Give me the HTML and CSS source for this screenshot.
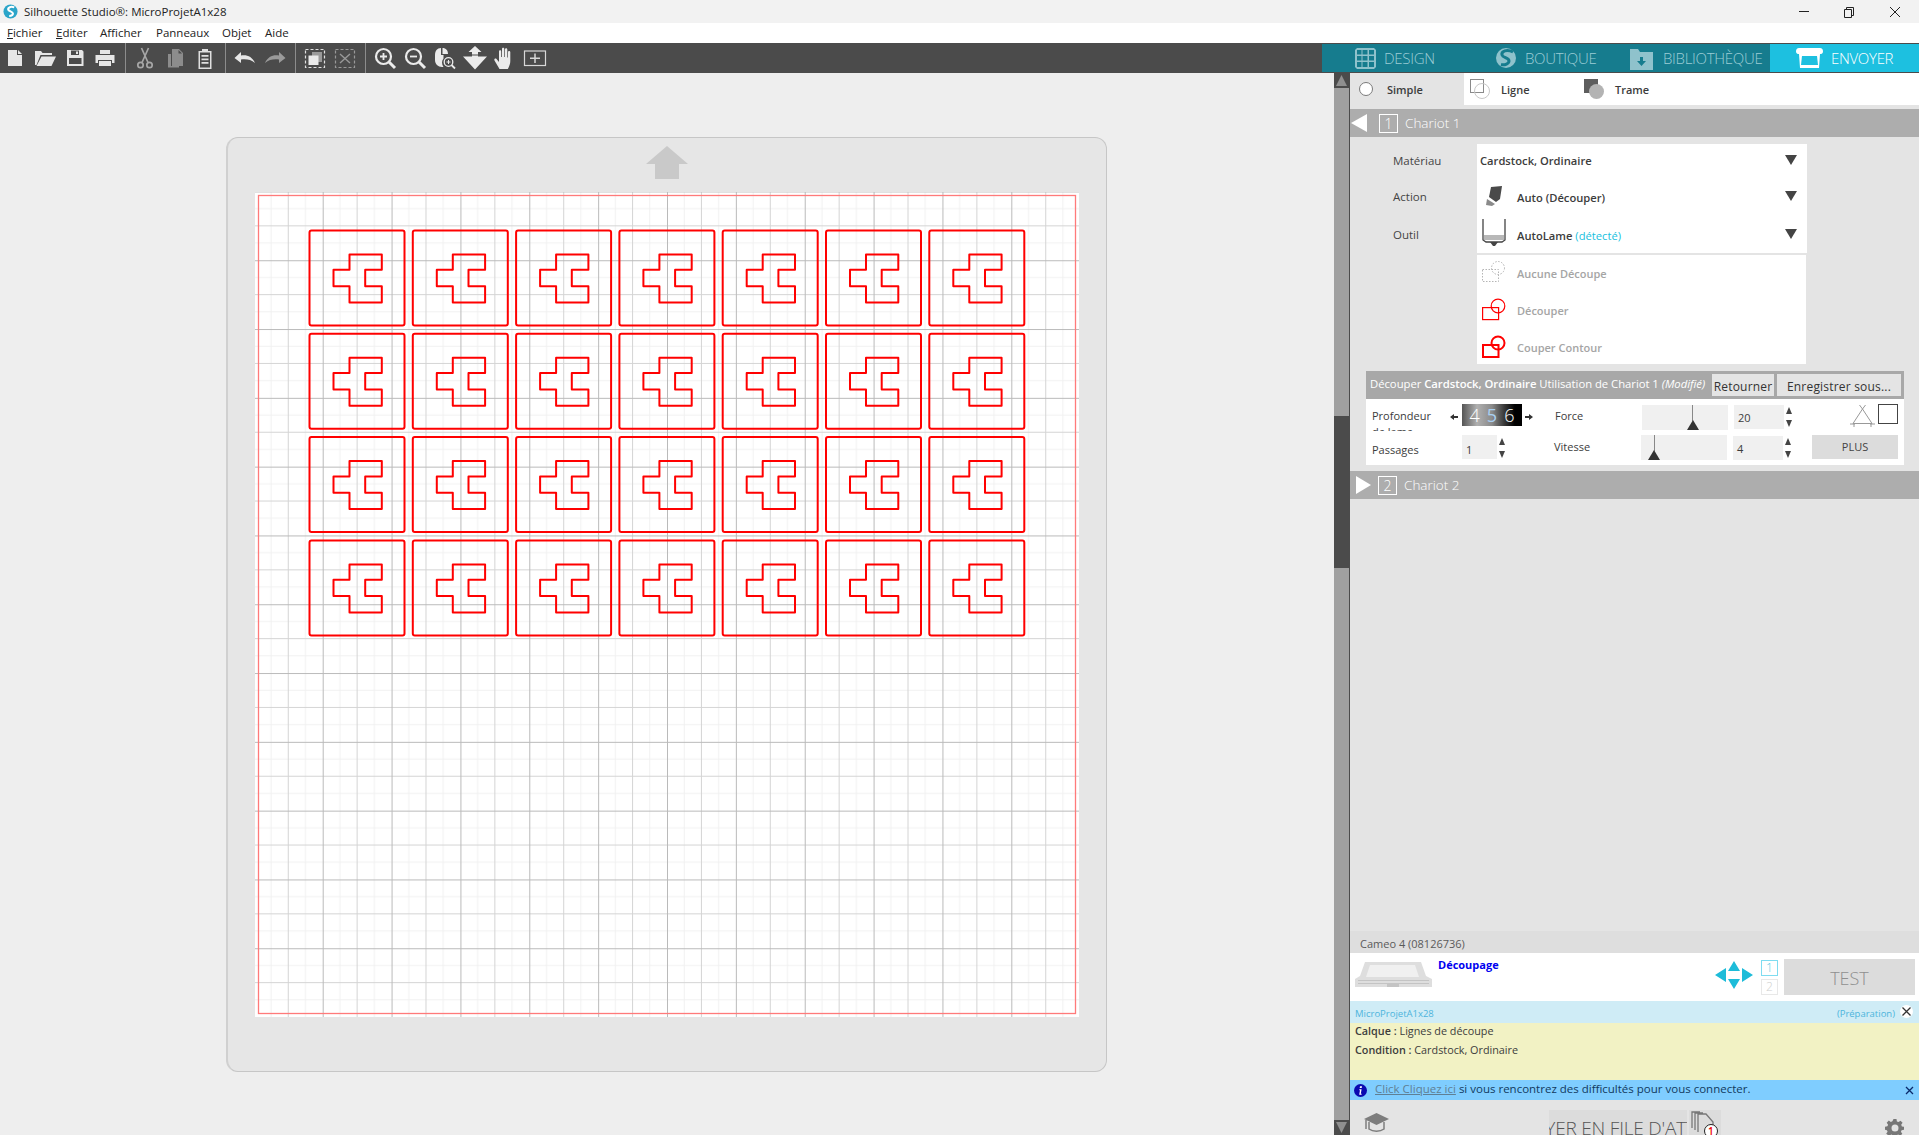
FILE: index.html
```html
<!DOCTYPE html>
<html lang="fr">
<head>
<meta charset="utf-8">
<title>Silhouette Studio</title>
<link rel="stylesheet" href="styles.css">
</head>
<body>
<div class="app">
  <header class="titlebar">
    <svg class="logo" viewBox="0 0 16 16"><circle cx="8" cy="8" r="7.5" fill="#2ba5c9"/><path d="M12 3.6C8.5 2.2 5 3.6 5.6 6c.5 2 5 1.8 5 4.2 0 1.6-2 2.6-4 2.6" fill="none" stroke="#fff" stroke-width="2.2"/></svg>
    <span class="title">Silhouette Studio®: MicroProjetA1x28</span>
    <div class="winctl">
      <svg class="wbtn" viewBox="0 0 46 22"><path d="M18 10.5h10" stroke="#222" fill="none"/></svg>
      <svg class="wbtn" viewBox="0 0 46 22"><path d="M17.500 8.500h7v8h-7zM19.500 8.500v-2h7v8h-2" stroke="#222" fill="none"/></svg>
      <svg class="wbtn" viewBox="0 0 46 22"><path d="M17 6l10 10M27 6L17 16" stroke="#222" fill="none"/></svg>
    </div>
  </header>

  <nav class="menubar">
    <span class="mi m1"><u>F</u>ichier</span>
    <span class="mi m2"><u>E</u>diter</span>
    <span class="mi m3">Afficher</span>
    <span class="mi m4">Panneaux</span>
    <span class="mi m5">Objet</span>
    <span class="mi m6">Aide</span>
  </nav>

  <div class="toolrow">
    <div class="tools">
      <div class="tgroup first">
        <svg class="ti" viewBox="0 0 24 24"><path fill="#e6e6e6" d="M5 4h9v5h5v11H5zM15 4l4 4h-4z"/></svg>
        <svg class="ti" viewBox="0 0 24 24"><path fill="#e6e6e6" d="M2 5h6l1.500 2H19v2H7.500L3.500 19H2zM8.500 10.500H23L18.500 20H3.500z"/></svg>
        <svg class="ti" viewBox="0 0 24 24"><path fill="#e6e6e6" fill-rule="evenodd" d="M4 4h15l1.500 1.500V20H4zM6 12v6h12.500v-6zM8 4.500V9h8V4.500zM13 5.500h2v2.500h-2z"/></svg>
        <svg class="ti" viewBox="0 0 24 24"><path fill="#e6e6e6" d="M7 4h10v4H7zM2.500 9h19v8H19v-3H5v3H2.500zM6 15h12v5H6z"/></svg>
      </div>
      <div class="tgroup">
        <svg class="ti" viewBox="0 0 24 24"><g fill="none" stroke="#a6a6a6" stroke-width="1.700"><circle cx="7.500" cy="19" r="2.700"/><circle cx="16.500" cy="19" r="2.700"/><path d="M9 16.500L15.500 2M15 16.500L8.500 2"/></g></svg>
        <svg class="ti" viewBox="0 0 24 24"><path fill="#8c8c8c" d="M5 8h3v12h8v1.500H5zM9 3h7l4 4v13H9z"/><path fill="#4b4b4b" d="M15.500 4v3.500H19z"/></svg>
        <svg class="ti" viewBox="0 0 24 24"><path fill="#e0e0e0" fill-rule="evenodd" d="M9 3h6v2h3.500v18h-13V5H9zM7 6.500v15h10v-15zM8.500 9h7v1.800h-7zM8.500 12.500h7v1.800h-7zM8.500 16h7v1.800h-7z"/></svg>
      </div>
      <div class="tgroup">
        <svg class="ti" viewBox="0 0 24 24"><path fill="#e8e8e8" d="M1.500 12L8 6v3.500c6-1 11 1 14 7.500-4-3.500-8.500-4-14-3.500V17z"/></svg>
        <svg class="ti" viewBox="0 0 24 24"><path fill="#9a9a9a" d="M22.500 12L16 6v3.500C10 8.500 5 10.500 2 17c4-3.500 8.500-4 14-3.500V17z"/></svg>
      </div>
      <div class="tgroup">
        <svg class="ti" viewBox="0 0 24 24"><rect x="2.500" y="3.500" width="19" height="18" fill="none" stroke="#e0e0e0" stroke-width="1.200" stroke-dasharray="3 2"/><path fill="#9a9a9a" d="M9 6h10v10H9z"/><path fill="#eaeaea" d="M5.500 9.500h10v9.500h-10z"/></svg>
        <svg class="ti" viewBox="0 0 24 24"><rect x="2.500" y="3.500" width="19" height="18" fill="none" stroke="#999" stroke-width="1.200" stroke-dasharray="3 2"/><path d="M7 8l10 9M17 8L7 17" stroke="#999" stroke-width="1.400" fill="none"/></svg>
      </div>
      <div class="tgroup last">
        <svg class="ti" viewBox="0 0 24 24"><g fill="none" stroke="#ebebeb"><circle cx="10.500" cy="10.500" r="7.500" stroke-width="2.200"/><path d="M16 16l6 6" stroke-width="3"/><path d="M7 10.500h7M10.500 7v7" stroke-width="1.800"/></g></svg>
        <svg class="ti" viewBox="0 0 24 24"><g fill="none" stroke="#ebebeb"><circle cx="10.500" cy="10.500" r="7.500" stroke-width="2.200"/><path d="M16 16l6 6" stroke-width="3"/><path d="M7 10.500h7" stroke-width="1.800"/></g></svg>
        <svg class="ti" viewBox="0 0 24 24"><path fill="#ebebeb" d="M8 2c-4 0-6 3-6 7v5c0 4 3 7 7 7h1.500c-2-3-2-6 0-8.500V9H8zM9.500 2v6h5.500C15 4.500 13 2 9.500 2z"/><g fill="none" stroke="#ebebeb"><circle cx="15.500" cy="16" r="4.300" stroke-width="1.300"/><path d="M18.500 19l3.500 3.500" stroke-width="1.800"/><path d="M13.500 16h4M15.500 14v4" stroke-width="1"/></g></svg>
        <svg class="ti" viewBox="0 0 24 24"><path fill="#ebebeb" d="M12 0l6.500 6H15v2.500H9V6H5.500zM0 10.500h24L12 23.500z"/><path fill="#ebebeb" d="M9 9.500h6v3H9z"/></svg>
        <svg class="ti" viewBox="0 0 24 24"><path fill="#ebebeb" d="M6.500 23l-5-8.500c-.8-1.500 1-2.500 2-1.500l2.500 3V5.500c0-1.600 2.200-1.600 2.200 0V11h.8V3c0-1.600 2.300-1.600 2.300 0v8h.7V3.500c0-1.600 2.300-1.600 2.300 0V11.500h.7V6c0-1.500 2.300-1.500 2.300 0v9c0 3-1 5-2.500 8z"/></svg>
        <svg class="ti wide" viewBox="0 0 24 24"><rect x="1.500" y="5" width="21" height="14.500" fill="none" stroke="#d8d8d8" stroke-width="1.200"/><path d="M12 7.500v9.500M7 12.200h10" stroke="#d8d8d8" stroke-width="1.500" fill="none"/></svg>
      </div>
    </div>
    <div class="tabs">
      <div class="tab t-design">
        <svg class="tabicon" viewBox="0 0 21 21"><path fill="#8fc2cc" fill-rule="evenodd" d="M2 0h17l2 2v17l-2 2H2l-2-2V2zM2 2v4.500h4.500V2zM7.500 2v4.500h5V2zM14 2v4.500h5V2zM2 8v4.500h4.500V8zM7.500 8v4.500h5V8zM14 8v4.500h5V8zM2 14v5h4.500v-5zM7.500 14v5h5v-5zM14 14v5h5v-5z"/></svg>
        <span>DESIGN</span>
      </div>
      <div class="tab t-boutique">
        <svg class="tabicon" viewBox="0 0 20 20"><circle cx="10" cy="10" r="10" fill="#8fc2cc"/><path d="M17 4C11 1 5 3 6 7c.8 3 7 2.500 7 6 0 2.500-4 4.500-8 3.500" fill="none" stroke="#167c8e" stroke-width="3"/></svg>
        <span>BOUTIQUE</span>
      </div>
      <div class="tab t-biblio">
        <svg class="tabicon" viewBox="0 0 23 23"><path fill="#8fc2cc" d="M0 2h8l2 3h13v18H0z"/><path fill="#167c8e" d="M10 10h3v4h3l-4.500 5L7 14h3z"/></svg>
        <span>BIBLIOTHÈQUE</span>
      </div>
      <div class="tab t-envoyer">
        <svg class="tabicon" viewBox="0 0 27 20"><path fill="#fff" d="M3 0h21c2 0 3 1.500 3 3.500 0 1.500-1 2.500-2 2.500h-1l-1 14H4L3 6H2C1 6 0 5 0 3.500 0 1.500 1 0 3 0z"/><path fill="#1dc0e0" d="M6 8h15l1 9H5z"/></svg>
        <span>ENVOYER</span>
      </div>
    </div>
  </div>

  <main class="main">
    <section class="canvas">
      <div class="mat">
        <svg class="matarrow" viewBox="0 0 42 33"><path fill="#c9c9c9" d="M21 0l21 18H33v15H9V18H0z"/></svg>
        <svg class="sheet" viewBox="0 0 824 825">
          <defs>
            <pattern id="grid" patternUnits="userSpaceOnUse" x="-1.160" y="-0.560" width="68.860" height="68.800">
              <path d="M17.215 0v68.800M51.645 0v68.800M0 17.200h68.860M0 51.600h68.860" stroke="#f1f1f1" stroke-width="1" fill="none"/>
              <path d="M34.430 0v68.800M0 34.400h68.860" stroke="#d4d4d4" stroke-width="1" fill="none"/>
              <path d="M.5 0v68.800M0 .5h68.860" stroke="#bababa" stroke-width="1" fill="none"/>
            </pattern>
            <g id="cell" fill="none" stroke="#f00" stroke-width="2" stroke-linejoin="round">
              <rect x="0" y="0" width="95" height="95" rx="2"/>
              <path d="M40 24h32.300v15.300H55.700v16.400h16.600V72H40V55.700H24V39.300h16z"/>
            </g>
            <g id="row">
              <use href="#cell" x="0"/><use href="#cell" x="103.300"/><use href="#cell" x="206.600"/><use href="#cell" x="309.900"/><use href="#cell" x="413.200"/><use href="#cell" x="516.500"/><use href="#cell" x="619.800"/>
            </g>
          </defs>
          <rect width="824" height="825" fill="#fff"/>
          <rect width="824" height="825" fill="url(#grid)"/>
          <rect x="3.500" y="3.500" width="817" height="818" fill="none" stroke="#ff7a7a" stroke-width="1.300"/>
          <g transform="translate(54.500 38.500)">
            <use href="#row" y="0"/><use href="#row" y="103.300"/><use href="#row" y="206.600"/><use href="#row" y="309.900"/>
          </g>
        </svg>
      </div>
    </section>

    <div class="scrollbar">
      <div class="sb-btn"><svg viewBox="0 0 15 15"><path fill="#8f8f8f" d="M7.500 2L13 13H2z"/></svg></div>
      <div class="sb-a"></div>
      <div class="sb-thumb"></div>
      <div class="sb-b"></div>
      <div class="sb-btn"><svg viewBox="0 0 15 15"><path fill="#8f8f8f" d="M2 2h11L7.500 13z"/></svg></div>
    </div>

    <aside class="panel">
      <div class="modes">
        <div class="mode active">
          <svg class="mode-ic" viewBox="0 0 14 14"><circle cx="7" cy="7" r="6.500" fill="#fff" stroke="#7a7a7a"/></svg>
          <span>Simple</span>
        </div>
        <div class="mode">
          <svg class="mode-ic2" viewBox="0 0 20 20"><rect x=".5" y=".5" width="13" height="13" fill="none" stroke="#8a8a8a"/><circle cx="12" cy="12" r="7.500" fill="none" stroke="#c8c8c8"/></svg>
          <span>Ligne</span>
        </div>
        <div class="mode">
          <svg class="mode-ic2" viewBox="0 0 20 20"><rect width="14" height="14" fill="#5e5e5e"/><circle cx="12.500" cy="12.500" r="7.500" fill="#b3b3b3"/></svg>
          <span>Trame</span>
        </div>
      </div>

      <div class="bar bar1">
        <svg class="bar-tri" viewBox="0 0 16 18"><path fill="#fff" d="M16 0v18L0 9z"/></svg>
        <span class="bar-num">1</span>
        <span class="bar-label">Chariot 1</span>
      </div>

      <div class="form">
        <span class="flabel">Matériau</span>
        <div class="sel sel-mat"><b>Cardstock, Ordinaire</b><i class="caret"></i></div>
        <span class="flabel lower">Action</span>
        <div class="sel">
          <svg class="sel-ic" viewBox="0 0 24 24"><path fill="#4a4a4a" d="M9 3l11-1-2 13-4 3-7-5z"/><path fill="#8a8a8a" d="M5 15l8 5-3 2-6-1z"/></svg>
          <b>Auto (Découper)</b><i class="caret"></i>
        </div>
        <span class="flabel lower">Outil</span>
        <div class="sel">
          <svg class="sel-ic tall" viewBox="0 0 24 30"><path fill="none" stroke="#444" stroke-width="1.300" d="M1 1v21l3 2h16l3-2V1"/><path fill="#b8b8b8" d="M2 17h20v5H2z"/><path fill="#444" d="M8 24h8l-3 4h-2z"/></svg>
          <b>AutoLame <em>(détecté)</em></b><i class="caret"></i>
        </div>
      </div>

      <div class="cutlist">
        <div class="cut">
          <svg class="cut-ic" viewBox="0 0 24 24"><g fill="none" stroke="#b5b5b5" stroke-dasharray="1.500 1.500"><rect x=".5" y="8.500" width="16" height="12"/><circle cx="16" cy="7" r="6.500"/></g></svg>
          <span>Aucune Découpe</span>
        </div>
        <div class="cut">
          <svg class="cut-ic" viewBox="0 0 24 24"><g fill="none" stroke="#f00" stroke-width="1.200"><rect x=".6" y="9.600" width="16" height="12"/><circle cx="16" cy="8" r="6.800"/></g></svg>
          <span>Découper</span>
        </div>
        <div class="cut">
          <svg class="cut-ic" viewBox="0 0 24 24"><g fill="none" stroke="#f00" stroke-width="2"><rect x="1" y="10" width="15.500" height="12"/><circle cx="16" cy="8" r="6.500"/></g></svg>
          <span>Couper Contour</span>
        </div>
      </div>

      <div class="settings">
        <div class="set-head">
          <span class="set-title">Découper <b>Cardstock, Ordinaire</b> Utilisation de Chariot 1 <em>(Modifié)</em></span>
          <span class="set-btn b-ret">Retourner</span>
          <span class="set-btn b-save">Enregistrer sous...</span>
        </div>
        <div class="set-body">
          <div class="set-row">
            <div class="lab lab-depth">Profondeur de lame</div>
            <svg class="tiny" viewBox="0 0 8 8"><path fill="#333" d="M0 4l4-3v2h4v2H4v2z"/></svg>
            <div class="depth"><span>3</span><span>4</span><span class="d5">5</span><span>6</span><span>7</span></div>
            <svg class="tiny" viewBox="0 0 8 8"><path fill="#333" d="M8 4L4 1v2H0v2h4v2z"/></svg>
            <div class="lab lab-force">Force</div>
            <div class="slider s-force"><i class="needle"></i><i class="knob"></i></div>
            <div class="num">20</div>
            <div class="spin"><i class="up"></i><i class="dn"></i></div>
            <svg class="trio" viewBox="0 0 25 24"><path fill="none" stroke="#999" d="M12.500 5L3 19.500h19zM9.500 1l3 4 3-4M0 20h5M20 20h5M4 19v4M21 19v4"/></svg>
            <div class="square"></div>
          </div>
          <div class="set-row r2">
            <div class="lab lab-pass">Passages</div>
            <div class="num n-pass">1</div>
            <div class="spin sp-pass"><i class="up"></i><i class="dn"></i></div>
            <div class="lab lab-speed">Vitesse</div>
            <div class="slider s-speed"><i class="needle"></i><i class="knob"></i></div>
            <div class="num">4</div>
            <div class="spin"><i class="up"></i><i class="dn"></i></div>
            <div class="plus">PLUS</div>
          </div>
        </div>
      </div>

      <div class="bar bar2">
        <svg class="bar-tri t2" viewBox="0 0 15 18"><path fill="#fff" d="M0 0v18l15-9z"/></svg>
        <span class="bar-num">2</span>
        <span class="bar-label">Chariot 2</span>
      </div>

      <div class="grow"></div>

      <div class="device">Cameo 4 (08126736)</div>
      <div class="devrow">
        <svg class="printer" viewBox="0 0 77 25"><path fill="#dedede" d="M10 0h56l5 14 6 3v8H0v-8l5-3z"/><path fill="#f0f0f0" d="M15 3h45l4 12H11z"/><path fill="#c4c4c4" d="M3 18h71v1H3zM3 21h71v1H3zM32 22h12v3H32z"/></svg>
        <span class="devname">Découpage</span>
        <svg class="arrows" viewBox="0 0 38 28"><path fill="#1dbcd9" d="M0 14l11-7v14zM38 14l-11-7v14zM19 0l6 10H13zM19 28l-6-10h12z"/></svg>
        <div class="slots"><span class="slot on">1</span><span class="slot">2</span></div>
        <div class="testbtn">TEST</div>
      </div>
      <div class="job">
        <span>MicroProjetA1x28</span>
        <span class="job-state">(Préparation)</span>
        <svg class="job-x" viewBox="0 0 13 13"><circle cx="6.500" cy="6.500" r="6.500" fill="#fff"/><path d="M2.500 2.500l8 8M10.500 2.500l-8 8" stroke="#333" stroke-width="1.300" fill="none"/></svg>
      </div>
      <div class="jobinfo">
        <p><b>Calque :</b> Lignes de découpe</p>
        <p><b>Condition :</b> Cardstock, Ordinaire</p>
      </div>
      <div class="notice">
        <svg class="info" viewBox="0 0 13 13"><circle cx="6.500" cy="6.500" r="6.500" fill="#0a0ab0"/><path fill="#fff" d="M6 2.200h2l-.3 1.800H5.700zM5.400 5.200h2.200L6.800 9.800h1l-.3 1H5.200l.8-4.600h-.8z"/></svg>
        <span class="notice-t"><a>Click Cliquez ici</a> si vous rencontrez des difficultés pour vous connecter.</span>
        <svg class="notice-x" viewBox="0 0 9 9"><path d="M1 1l7 7M8 1L1 8" stroke="#0a2a6a" stroke-width="1.300" fill="none"/></svg>
      </div>
      <div class="footer">
        <svg class="hat" viewBox="0 0 25 25"><path fill="#7d7d7d" d="M12.500 2L25 8l-12.500 6L0 8z"/><path fill="none" stroke="#7d7d7d" stroke-width="1.500" d="M5 11v7c4 3 11 3 15 0v-7M2 9v9"/></svg>
        <div class="queue"><span>ENVOYER EN FILE D'ATTENTE</span></div>
        <div class="qicon">
          <svg viewBox="0 0 32 25"><path fill="none" stroke="#777" stroke-width="1.300" d="M3 18V2h8M6 20V3h8M9 22V4h8l7 8v10"/><circle cx="22" cy="21" r="6.500" fill="#fff" stroke="#222"/></svg>
          <span class="qcount">1</span>
        </div>
        <svg class="gear" viewBox="0 0 18 18"><path fill="#777" d="M7.500 0h3l.4 2.400 1.600.7 2-1.400 2.100 2.100-1.400 2 .7 1.600 2.100.4v3l-2.400.4-.7 1.600 1.400 2-2.100 2.100-2-1.400-1.600.7-.4 2.400h-3l-.4-2.400-1.600-.7-2 1.400L.2 14.800l1.400-2-.7-1.600L-1 10.700v-3l2.400-.4.700-1.600-1.400-2L2.800 1.600l2 1.400 1.600-.7zM9 5.500a3.500 3.500 0 100 7 3.500 3.500 0 000-7z"/></svg>
      </div>
    </aside>
  </main>
</div>
</body>
</html>
```

FILE: styles.css
```css
* { box-sizing: border-box; }
html, body { margin: 0; padding: 0; }
body {
  width: 1919px;
  height: 1135px;
  overflow: hidden;
  font-family: "Open Sans", "Noto Sans", sans-serif;
  font-size: 11.5px;
  color: #3c3c3c;
  background: #eee;
}
.app { display: flex; flex-direction: column; height: 1135px; }

/* title bar */
.titlebar { height: 23px; background: #f2f2f2; display: flex; align-items: center; padding-left: 3px; color: #222; flex: none; }
.logo { width: 15px; height: 15px; margin-right: 6px; }
.title { font-size: 11.5px; }
.winctl { margin-left: auto; display: flex; }
.wbtn { width: 46px; height: 22px; display: block; }

/* menu */
.menubar { height: 20px; background: #fff; display: flex; align-items: center; padding-bottom: 2px; color: #222; flex: none; font-size: 11.5px; }
.mi { display: block; }
.m1 { margin-left: 7px; width: 49px; }
.m2 { width: 44px; }
.m3 { width: 56px; }
.m4 { width: 66px; }
.m5 { width: 43px; }

/* toolbar */
.toolrow { height: 30px; background: #4b4b4b; display: flex; flex: none; }
.tools { width: 1322px; display: flex; }
.tgroup { display: flex; align-items: center; padding: 0 5px 0 4px; border-right: 1px solid #8c8c8c; }
.tgroup.first { padding-left: 0; }
.tgroup.last { border-right: 0; }
.ti { width: 24px; height: 24px; margin: 0 3px; display: block; }
.tabs { flex: 1; display: flex; padding: 1px 0; }
.tab { height: 28px; display: flex; align-items: center; background: #167c8e; color: #9ccdd6; font-size: 15px; font-weight: 300; letter-spacing: -.3px; }
.tabicon { display: block; margin-right: 8px; }
.t-design { width: 174px; padding-left: 33px; }
.t-design .tabicon { width: 21px; height: 21px; }
.t-boutique { width: 134px; }
.t-boutique .tabicon { width: 20px; height: 20px; margin-right: 9px; }
.t-biblio { width: 140px; }
.t-biblio .tabicon { width: 23px; height: 23px; margin-right: 10px; }
.t-envoyer { flex: 1; padding-left: 26px; background: #1dc0e0; color: #fff; }
.t-envoyer .tabicon { width: 27px; height: 20px; }

/* main */
.main { flex: 1; display: flex; min-height: 0; }
.canvas { width: 1334px; padding: 64px 0 0 226px; background: #eee; flex: none; }
.mat { width: 881px; height: 935px; background: #e6e6e6; border: 1px solid #c6c6c6; border-left: 2px solid #d0d0d0; border-radius: 12px; display: flex; flex-direction: column; align-items: flex-start; }
.matarrow { width: 42px; height: 33px; display: block; margin: 8px 0 0 418px; }
.sheet { width: 824px; height: 825px; display: block; margin: 13px 0 0 27px; }

/* scrollbar */
.scrollbar { width: 16px; flex: none; display: flex; flex-direction: column; background: #a0a0a0; border-right: 1px solid #4b4b4b; }
.sb-btn { height: 15px; background: #4b4b4b; flex: none; }
.sb-btn svg { width: 15px; height: 15px; display: block; }
.sb-a { height: 328px; }
.sb-thumb { height: 152px; background: #4b4b4b; }
.sb-b { flex: 1; }

/* panel */
.panel { flex: 1; background: #e4e4e4; display: flex; flex-direction: column; min-width: 0; }
.modes { height: 32px; background: #fff; display: flex; flex: none; }
.mode { width: 114px; display: flex; align-items: center; font-weight: 600; font-size: 11px; padding-left: 6px; color: #3c3c3c; }
.mode.active { background: #e4e4e4; padding-left: 9px; }
.mode-ic { width: 14px; height: 14px; margin-right: 14px; }
.mode-ic2 { width: 20px; height: 20px; margin: 0 11px 0 0; }
.bar { height: 28px; background: #adadad; display: flex; align-items: center; flex: none; color: #fff; }
.bar1 { margin-top: 4px; padding-left: 1px; }
.bar2 { margin-top: 6px; padding-left: 6px; }
.bar-tri { width: 16px; height: 18px; margin-right: 12px; }
.bar-tri.t2 { width: 15px; height: 18px; margin-right: 7px; }
.bar-num { width: 19px; height: 19px; border: 1px solid #fff; text-align: center; font-size: 14px; font-weight: 300; line-height: 17px; margin-right: 7px; }
.bar-label { font-size: 13.500px; font-weight: 300; }

.form { display: grid; grid-template-columns: 127px 330px; grid-template-rows: 33px 38px 38px; margin-top: 7px; flex: none; }
.flabel { padding-left: 43px; font-size: 11.500px; align-self: center; color: #444; }
.flabel.lower { margin-top: 1px; }
.sel { background: #fff; display: flex; align-items: center; padding: 2px 0 0 5px; position: relative; font-size: 11.200px; }
.sel b, .cut span { font-weight: 600; }
.sel-mat { padding: 0 0 0 3px; }
.sel em { font-style: normal; color: #18bfe0; font-weight: 400; }
.caret { position: absolute; right: 10px; top: 14px; width: 0; height: 0; border-left: 6.500px solid transparent; border-right: 6.500px solid transparent; border-top: 10px solid #444; }
.sel-mat .caret { top: 11px; }
.sel-ic { width: 24px; height: 24px; margin: -2px 11px 0 0; flex: none; }
.sel-ic.tall { height: 30px; margin-top: -5px; }
.cut-ic { width: 24px; height: 24px; margin-right: 11px; flex: none; }
.cutlist { width: 329px; height: 109px; margin: 2px 0 0 127px; background: #fff; display: flex; flex-direction: column; gap: 1px; flex: none; }
.cut { height: 36px; flex: none; display: flex; align-items: center; padding-left: 5px; color: #a5a5a5; font-size: 11px; }

.settings { margin: 7px 15px 0 16px; flex: none; }
.set-head { height: 28px; background: #a8a8a8; color: #fff; display: flex; align-items: center; padding-left: 4px; }
.set-title { width: 342px; white-space: nowrap; font-size: 11.300px; letter-spacing: -.03px; margin-top: -3px; }
.set-title b { font-weight: 600; }
.set-btn { height: 22px; background: #e4e4e4; color: #333; font-size: 12px; display: flex; align-items: center; justify-content: center; letter-spacing: .2px; padding-top: 2px; }
.b-ret { width: 62px; margin-right: 3px; }
.b-save { width: 124px; }
.set-body { height: 66px; background: #fff; padding: 5px 0 0 6px; display: flex; flex-direction: column; gap: 4px; }
.set-row { display: flex; height: 27px; align-items: flex-start; }
.r2 { height: 26px; }
.lab { font-size: 11px; line-height: 16px; color: #3c3c3c; }
.lab-depth { width: 72px; margin-right: 6px; height: 27px; overflow: hidden; padding-top: 4px; flex: none; }
.tiny { width: 8px; height: 8px; margin: 9px 4px 0 0; flex: none; }
.depth { width: 60px; height: 22px; margin-right: 3px; display: flex; justify-content: center; gap: 7px; overflow: hidden; background: linear-gradient(90deg, #555 0, #b0b0b0 25%, #8a8a8a 50%, #3a3a3a 70%, #000 88%); color: #fff; font-size: 18px; line-height: 22px; font-weight: 300; flex: none; }
.depth span { flex: none; }
.d5 { color: #a9d0f2; font-weight: 400; }
.lab-force { width: 87px; margin-left: 18px; padding-top: 4px; flex: none; }
.slider { width: 86px; height: 25px; background: #f0f0f0; position: relative; flex: none; margin-top: 1px; }
.needle { position: absolute; top: 0; width: 1px; height: 16px; background: #888; }
.knob { position: absolute; bottom: 0; width: 0; height: 0; border-left: 6px solid transparent; border-right: 6px solid transparent; border-bottom: 10px solid #333; }
.s-force .needle { left: 50px; }
.s-force .knob { left: 45px; }
.s-speed .needle { left: 13px; }
.s-speed .knob { left: 7px; }
.num { width: 50px; height: 24px; margin: 1px 0 0 6px; background: #f0f0f0; padding: 6px 0 0 4px; font-size: 11px; line-height: 14px; flex: none; }
.spin { width: 12px; margin: 1px 0 0 -1px; display: flex; flex-direction: column; gap: 6px; align-items: center; padding-top: 2px; flex: none; }
.up { width: 0; height: 0; border-left: 3.500px solid transparent; border-right: 3.500px solid transparent; border-bottom: 7px solid #444; }
.dn { width: 0; height: 0; border-left: 3.500px solid transparent; border-right: 3.500px solid transparent; border-top: 7px solid #444; }
.trio { width: 25px; height: 24px; margin-left: 55px; flex: none; }
.square { width: 20px; height: 20px; border: 1px solid #444; margin-left: 3px; flex: none; }
.r2 .lab-pass { width: 90px; padding-top: 7px; flex: none; }
.n-pass { width: 35px; margin: 0; padding-top: 8px; }
.spin.sp-pass { margin-left: -1px; margin-right: 2px; }
.lab-speed { width: 87px; margin-left: 44px; padding-top: 4px; flex: none; }
.r2 .slider { margin-top: 0; }
.plus { width: 86px; height: 24px; margin: 0 0 0 18px; background: #dcdcdc; text-align: center; line-height: 24px; font-size: 11px; color: #444; flex: none; }

.grow { flex: 1; }
.device { height: 22px; background: #dedede; padding-left: 10px; line-height: 25px; font-size: 11px; color: #5a5a5a; flex: none; }
.devrow { height: 48px; background: #fff; display: flex; padding-left: 5px; flex: none; }
.printer { width: 77px; height: 25px; margin-top: 9px; }
.devname { color: #0000f0; font-weight: 700; font-size: 11px; margin: 4px 0 0 6px; width: 277px; }
.arrows { width: 38px; height: 28px; margin-top: 8px; }
.slots { display: flex; flex-direction: column; gap: 3px; margin: 7px 6px 0 8px; }
.slot { width: 17px; height: 16px; border: 1px solid #e8e8e8; color: #cfcfcf; font-size: 12px; font-weight: 300; text-align: center; line-height: 14px; }
.slot.on { border-color: #7fdcf0; color: #5cc9e2; }
.testbtn { width: 131px; height: 36px; margin-top: 6px; background: #dcdcdc; color: #8f8f8f; font-size: 18px; font-weight: 300; text-align: center; line-height: 38px; }
.job { height: 22px; background: #cfecf6; color: #4db4dc; display: flex; align-items: center; padding: 2px 6px 0 5px; font-size: 9.500px; flex: none; }
.job-state { margin-left: auto; margin-right: 5px; }
.job-x { width: 13px; height: 13px; margin-top: -3px; }
.jobinfo { height: 57px; background: #f2f2c4; padding: 0 5px; font-size: 10.800px; color: #3c3c3c; flex: none; overflow: hidden; }
.jobinfo p { margin: 0; line-height: 18.500px; position: relative; top: -1px; }
.jobinfo b { font-weight: 600; }
.notice { height: 20px; background: #7fcdff; display: flex; align-items: center; padding: 0 0 3px 4px; color: #123a5e; font-size: 11.500px; flex: none; }
.info { width: 13px; height: 13px; margin: 3px 8px 0 0; }
.notice-t a { color: #5f7f94; text-decoration: underline; }
.notice-x { width: 9px; height: 9px; margin: 3px 5px 0 auto; }
.footer { height: 35px; flex: none; display: flex; align-items: flex-start; padding: 10px 15px 0 14px; overflow: hidden; }
.hat { width: 25px; height: 25px; margin-top: 1px; flex: none; }
.queue { width: 138px; height: 25px; margin-left: 160px; background: #dcdcdc; display: flex; justify-content: center; overflow: hidden; font-size: 19px; line-height: 36px; color: #555; white-space: nowrap; flex: none; font-weight: 300; letter-spacing: -.2px; }
.queue span { flex: none; }
.qicon { width: 32px; height: 25px; margin-left: 2px; background: #dcdcdc; position: relative; flex: none; overflow: hidden; }
.qicon svg { width: 32px; height: 25px; display: block; }
.qcount { position: absolute; left: 19px; top: 15px; font-size: 10px; color: #e00; line-height: 12px; font-weight: 600; }
.gear { width: 18px; height: 18px; margin: 9px 0 0 auto; flex: none; overflow: visible; }
```
